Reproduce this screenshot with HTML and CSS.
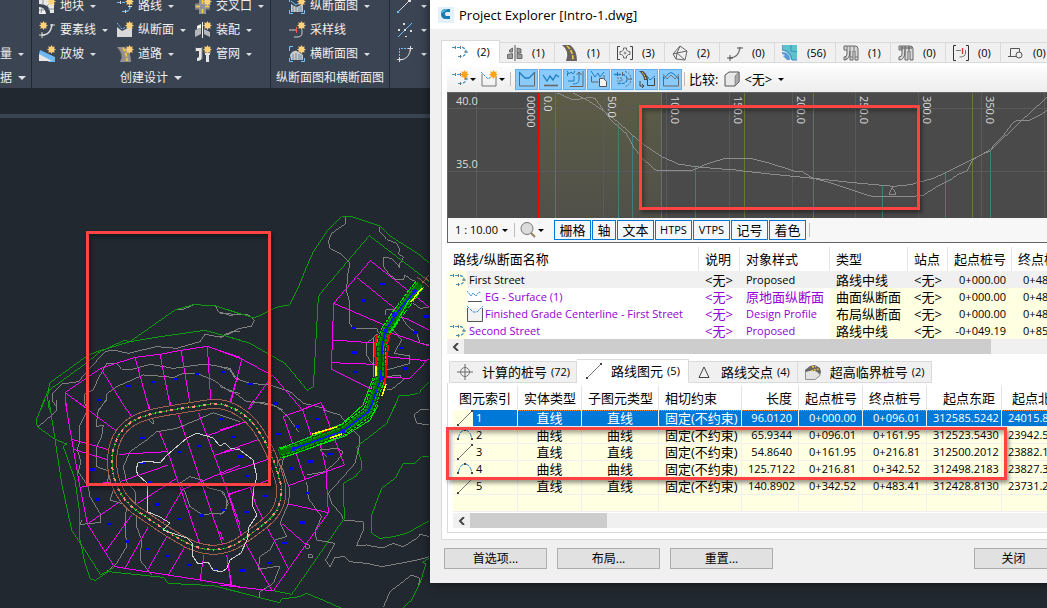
FILE: index.html
```html
<!DOCTYPE html>
<html lang="zh-CN">
<head>
<meta charset="utf-8">
<title>Project Explorer</title>
<link rel="stylesheet" href="styles.css">
</head>
<body>
<svg class="defs" aria-hidden="true">
  <defs>
    <symbol id="sun" viewBox="0 0 10 10"><path d="M5 0l1.2 2.2L8.6 1.4 7.8 3.8 10 5 7.8 6.2l.8 2.4-2.4-.8L5 10 3.8 7.8l-2.4.8.8-2.4L0 5l2.2-1.2-.8-2.4 2.4.8z"/></symbol>
    <symbol id="align" viewBox="0 0 16 16"><path d="M0 3.500h3M5 3.500h4M6 12.500h3" stroke="#3c96c8"/><path d="M10 3.500Q14 4 14 8T9 12.500" fill="none" stroke="#3c96c8" stroke-width="1.300" stroke-dasharray="3 1.500"/><path d="M3.500 2v3M8.500 2v3M12 8h4M8.500 11v3" stroke="#777"/></symbol>
    <symbol id="r-parcel" viewBox="0 0 16 16"><path d="M0 1h10v5h5v9h-4q0-5-3-7T0 6z" fill="#e8e8e8"/><path d="M0 9q6 0 7 7H0z" fill="#f4f4f4"/><path d="M4 1v6M8 8l3-3M9 11h6M3 10l-1 5M0 12h5" stroke="#8b929c" fill="none"/></symbol>
    <symbol id="r-align" viewBox="0 0 16 16"><path d="M0 4.500h3M5 4.500h3M5 13.500h3M9 13.500q4-1 4-5" fill="none" stroke="#6fc1ff" stroke-width="1.200" stroke-dasharray="3 1"/><path d="M3.500 3v3M8.500 12v3M11 8.500h4" stroke="#ddd"/></symbol>
    <symbol id="r-cross" viewBox="0 0 16 16"><path d="M4 0h7v5h4v7h-4v4H4v-4H0V5h4z" fill="#8f9296"/><path d="M7.500 2v4M7.500 11v4M1 8.500h4M10 8.500h4" stroke="#ffc93c" stroke-width="1.500"/><path d="M4 5q-1 0-4 1M4 12q-1-1-4-1M11 12q1-1 4-1" stroke="#555" fill="none"/></symbol>
    <symbol id="r-feature" viewBox="0 0 16 16"><path d="M3 13q9 0 10-11" fill="none" stroke="#ddd" stroke-width="1.500"/><path d="M0 13h6M3 10v6M11 3h5" stroke="#ddd"/></symbol>
    <symbol id="r-profile" viewBox="0 0 16 16"><path d="M0 5l5 4 4-2 6-3v11H0z" fill="#d9d9d9"/><path d="M0 1l5 6 4-2" fill="none" stroke="#6fc1ff" stroke-dasharray="2 1"/></symbol>
    <symbol id="r-assembly" viewBox="0 0 16 16"><path d="M0 8l6-2v6l-6 3zM9 7l6 3v5l-6-3z" fill="#b5b7ba"/><path d="M2 4l4-2v4l-4 1z" fill="#f5f5f5"/><path d="M7.500 0v16" stroke="#eee"/></symbol>
    <symbol id="r-grade" viewBox="0 0 16 16"><path d="M0 8l1-4 15 7v5H10z" fill="#6fb9f2"/><path d="M0 8v7h13z" fill="#e8e8e8"/></symbol>
    <symbol id="r-road" viewBox="0 0 16 16"><path d="M0 1h8q6 5 6 15H3Q7 7 0 1z" fill="#95918b"/><path d="M6 2q4 5 4 13" fill="none" stroke="#ffc93c" stroke-width="1.600" stroke-dasharray="4 1.500"/><path d="M0 1q5 5 5 12" fill="none" stroke="#666"/></symbol>
    <symbol id="r-pipe" viewBox="0 0 16 16"><path d="M1 2h6v9q0 4-5 4v-3q2 0 2-2V5H1zM10 7h5v2h-1v7h-3V9h-1z" fill="#e6e6e6"/><path d="M0 1v5M7 1v12M10 6h5" stroke="#8b8e92"/></symbol>
    <symbol id="r-pview" viewBox="0 0 16 16"><path d="M2 6l3 2 3 1 6-3v8H2z" fill="#c8cdd2"/><path d="M4 8v6M7 9v5M10 9v5M12 8v6" stroke="#6f87a0"/><path d="M2 3l5 4 3-2" fill="none" stroke="#6fc1ff"/><path d="M.5 12v3.500H4M12 15.500h3.500V12M.5 4V.5H4" fill="none" stroke="#6fc1ff"/></symbol>
    <symbol id="r-section" viewBox="0 0 16 16"><path d="M1 9q3-5 7-4l6 4v5H2z" fill="#c8cdd2"/><path d="M4 8v6M7 7v7M10 8v6M12 9v5" stroke="#6f87a0"/><path d="M.5 12v3.500H4M12 15.500h3.500V12M.5 5V.5H4" fill="none" stroke="#6fc1ff"/></symbol>
    <symbol id="r-sample" viewBox="0 0 16 16"><path d="M0 8h7M13 8v3q0 4-5 4H5" fill="none" stroke="#ccc"/><path d="M7.500 5v6" stroke="#ff5a5a"/></symbol>
    <symbol id="r-line" viewBox="0 0 16 16"><path d="M1 14L12 3" stroke="#ddd"/><path d="M11 1h3v3h-3z" fill="#ddd"/><path d="M0 13h2v2H0z" fill="#6fc1ff"/></symbol>
    <symbol id="r-xline" viewBox="0 0 16 16"><path d="M1 15L15 1" stroke="#6fc1ff"/><path d="M6 1h2v2H6zM1 7h2v2H1zM7 7h2v2H7zM13 8h2v2h-2zM8 14h2v1H8z" fill="#ddd"/></symbol>
    <symbol id="r-arc" viewBox="0 0 16 16"><path d="M2.500 13V2.500H13" fill="none" stroke="#6fc1ff" stroke-dasharray="2 1"/><path d="M3 14q10-1 10.500-12" fill="none" stroke="#ddd"/><path d="M0 13.500h6M2.500 11v5M11 2.500h5M13.500 0v5" stroke="#ddd"/></symbol>
    <symbol id="asm" viewBox="0 0 16 16"><path d="M.5 9.500l5-1v5h-5zM10 8.500l5 1v4h-5zM2.500 5l3-2v4h-3zM10 3l4 1v4h-4z" fill="#9a9a9a" stroke="#555" stroke-width=".8"/><path d="M8 0v16" stroke="#555"/></symbol>
    <symbol id="road" viewBox="0 0 16 16"><path d="M0 0h8q7 5 7 16H4Q8 6 0 0z" fill="#66625e"/><path d="M5 1q6 5 6 14" fill="none" stroke="#ffc93c" stroke-width="1.600" stroke-dasharray="4 1.500"/></symbol>
    <symbol id="pgroup" viewBox="0 0 16 16"><path d="M3 1.500H.5v13H3M13 1.500h2.500v13H13" fill="none" stroke="#444"/><path d="M6.500 3h3v2l2 1.500h1.500v3h-1.500L9.500 11v2h-3v-2l-2-1.500H3v-3h1.500L6.500 5z" fill="none" stroke="#666"/><circle cx="8" cy="8" r="1" fill="none" stroke="#555" stroke-width=".7"/></symbol>
    <symbol id="surf" viewBox="0 0 16 16"><path d="M8 1l7 5-2 9-9-1-3-5zM8 1L5 8l8 7M1 9l4-1 10-2M5 8l-1 6" fill="none" stroke="#666"/></symbol>
    <symbol id="feat" viewBox="0 0 16 16"><path d="M2 13q10 0 11-11" fill="none" stroke="#777" stroke-width="1.300"/><path d="M0 13h6M3 10v6M10 3h6" stroke="#555"/></symbol>
    <symbol id="site" viewBox="0 0 16 16"><path d="M0 0h15v15H9Q8 8 0 5z" fill="#5bc4cb"/><path d="M0 0v5q9 0 10 10h5M9 0v6l6 1" fill="none" stroke="#4b86c7"/><path d="M0 7q8 0 8 8H5l-4-4 2-1-3-1z" fill="#5b9bd5"/></symbol>
    <symbol id="pipe" viewBox="0 0 16 16"><path d="M1 1h11q3 0 3 3v11h-3V6h-2v9H7V6Q7 15 1 15v-3q3 0 3-3V5H1z" fill="#d9d9d9" stroke="#666"/><path d="M4 1v4M7 1v5M11 1v4M3 12v3M12 12h3M7 12h3" stroke="#777"/></symbol>
    <symbol id="ppipe" viewBox="0 0 16 16"><path d="M1 1h11q3 0 3 3v11h-3V6h-2v9H7V6Q7 15 1 15v-3q3 0 3-3V5H1z" fill="#d9d9d9" stroke="#666"/><path d="M2 3h12M4 1v4M7 1v5M11 1v4" stroke="#777" stroke-width="1.600"/></symbol>
    <symbol id="slg" viewBox="0 0 16 16"><path d="M3 .5H.5v15H3M13 .5h2.500v15H13" fill="none" stroke="#333"/><path d="M3 5.500h5M12.500 5v3q0 4-6 4" fill="none" stroke="#777"/><path d="M9.500 3v6" stroke="#d33" stroke-width="1.300"/></symbol>
    <symbol id="vf" viewBox="0 0 16 16"><path d="M2.500 3.500h9v8h-9zM0 11.500h14" fill="none" stroke="#555"/><circle cx="11" cy="10" r="3" fill="#eee" stroke="#555"/></symbol>
    <symbol id="prof" viewBox="0 0 16 16"><path d="M1 3v12h14V5" fill="none" stroke="#777"/><path d="M0 1l7 7 3-2" fill="none" stroke="#2d8fd0" stroke-dasharray="2.500 1"/></symbol>
    <symbol id="t1" viewBox="0 0 18 18"><path d="M1.500 3v13h15V3" fill="none" stroke="#666"/><path d="M1 2l6 6h4l6-6" fill="none" stroke="#1b7fc4" stroke-width="1.300"/></symbol>
    <symbol id="t2" viewBox="0 0 18 18"><path d="M2 15.500h14" stroke="#666" stroke-width="1.600"/><path d="M1 5l4 6 3-5 3 4 3-5 3 2" fill="none" stroke="#1b7fc4" stroke-width="1.300"/></symbol>
    <symbol id="t3" viewBox="0 0 18 18"><path d="M1 1l2 3 2-2 2 2 2-3M2 11h6V6M13 3v7q0 4-6 4" fill="none" stroke="#1b7fc4"/><path d="M1.500 3v3M10.500 5L13 2l2.500 3M4 16.500h13V1" fill="none" stroke="#666"/></symbol>
    <symbol id="t4" viewBox="0 0 18 18"><path d="M1 1l4 6 3-4 2 4 4-5" fill="none" stroke="#1b7fc4"/><path d="M1.500 6v6h7M14 5v4" fill="none" stroke="#666"/><path d="M9.500 8.500h4l3 3v5h-7z" fill="#f4f4f4" stroke="#555"/></symbol>
    <symbol id="t5" viewBox="0 0 18 18"><path d="M0 4.500h8q5 .5 5 4.500t-5 4.500H3" fill="none" stroke="#1b7fc4" stroke-width="1.300" stroke-dasharray="3 1"/><path d="M3 8h5v3H3M11 1.500q6 2 6 7.500t-6 7.500" fill="none" stroke="#60707c" stroke-dasharray="2 1"/><path d="M3.500 2v4M8.500 2v4M12 9h6" stroke="#666"/></symbol>
    <symbol id="t6" viewBox="0 0 18 18"><path d="M1 1h4q5 4 5 9H6Q6 5 1 1z" fill="#4f4c49"/><path d="M4 2q3 3 4 8" fill="none" stroke="#ffc93c" stroke-dasharray="2 1"/><path d="M2 11v5h4M4 14l2 2-2 2M9.500 10v5.500h7V8" fill="none" stroke="#444"/><path d="M9 6l3 4 5-4" fill="none" stroke="#1b7fc4"/></symbol>
    <symbol id="t7" viewBox="0 0 18 18"><path d="M1.500 6v10h15V6" fill="none" stroke="#666"/><path d="M1 10l5-6q3-3 6 0l5 6" fill="none" stroke="#1b7fc4"/><path d="M1 4l4 5 4-4 4 4 4-5" fill="none" stroke="#777"/></symbol>
    <symbol id="cube" viewBox="0 0 16 16"><path d="M1 4l4-3h10v10l-4 4H1z" fill="#e8e8e8" stroke="#555"/><path d="M11 15V5l4-4v10z" fill="#aaa" stroke="#555" stroke-width=".5"/></symbol>
    <symbol id="lens" viewBox="0 0 16 16"><path d="M11 11l4 4" stroke="#9a7b5a" stroke-width="2"/><circle cx="7" cy="6.500" r="6" fill="#dcdcdc" stroke="#777"/></symbol>
    <symbol id="eg" viewBox="0 0 16 16"><path d="M1 12.500h14" stroke="#555"/><path d="M0 2l4 5 2-3 3 3 3-4 2 1" fill="none" stroke="#2d8fd0" stroke-dasharray="2 .7"/></symbol>
    <symbol id="fg" viewBox="0 0 16 16"><path d="M.5 2v13.500h15V2" fill="#f2f2f2" stroke="#555"/><path d="M0 0l6 6h4l6-6" fill="none" stroke="#2d8fd0" stroke-dasharray="3 1"/></symbol>
    <symbol id="target" viewBox="0 0 16 16"><circle cx="8" cy="8" r="4.500" fill="none" stroke="#777"/><path d="M0 8h16M8 0v16" stroke="#666"/></symbol>
    <symbol id="line" viewBox="0 0 16 16"><path d="M1 15L15 1" stroke="#777"/><path d="M0 14h2v2H0zM14 0h2v2h-2z" fill="#444"/></symbol>
    <symbol id="arc" viewBox="0 0 16 16"><path d="M1 12Q3 3 8 3t7 9" fill="none" stroke="#2d8fd0" stroke-dasharray="5 1"/><path d="M0 11h2v2H0zM14 11h2v2h-2zM7 2h2v2H7z" fill="#444"/></symbol>
    <symbol id="tri" viewBox="0 0 16 16"><path d="M3 13.500h10L8 3z" fill="none" stroke="#444"/></symbol>
    <symbol id="super" viewBox="0 0 16 16"><path d="M.5 6v9.500H10l5-4V6z" fill="#e2e2e2" stroke="#777" stroke-width=".8"/><path d="M0 6l5-4 5-1 5 3 1 5-2 1q-4-6-13-2z" fill="#6b6864"/><path d="M6 7l3-1 5-1M7 3l4-.5" stroke="#ffc93c" stroke-width="1.300" stroke-dasharray="2 1"/></symbol>
    <symbol id="logo" viewBox="0 0 16 16"><path d="M0 0h16v16H0z" fill="#e4f0f7"/><path d="M12 5V2H8Q3 2 3 7t5 5h4V9H8.500Q7 9 7 7t1.500-2z" fill="#1c79ad"/><path d="M3 7q0-5 5-5h2L6 5z" fill="#4ab3dc"/></symbol>
    <linearGradient id="zone" x1="0" y1="0" x2="0" y2="1"><stop offset="0" stop-color="#5c5c47"/><stop offset="1" stop-color="#505049"/></linearGradient>
  </defs>
</svg>

<main class="desktop">
  <header class="ribbon">
    <section class="group group-edge">
      <div class="tools"><span></span><span></span><button class="tool">量<i class="caret"></i></button></div>
      <button class="group-name">据<i class="caret big"></i></button>
    </section>
    <section class="group group-design">
      <div class="tools tools-3">
        <button class="tool"><span class="ico"><svg><use href="#r-parcel"/></svg><svg class="new"><use href="#sun"/></svg></span>地块<i class="caret"></i></button>
        <button class="tool"><span class="ico"><svg><use href="#r-align"/></svg><svg class="new"><use href="#sun"/></svg></span>路线<i class="caret"></i></button>
        <button class="tool"><span class="ico"><svg><use href="#r-cross"/></svg><svg class="new"><use href="#sun"/></svg></span>交叉口<i class="caret"></i></button>
        <button class="tool"><span class="ico"><svg><use href="#r-feature"/></svg><svg class="new left"><use href="#sun"/></svg></span>要素线<i class="caret"></i></button>
        <button class="tool"><span class="ico"><svg><use href="#r-profile"/></svg><svg class="new"><use href="#sun"/></svg></span>纵断面<i class="caret"></i></button>
        <button class="tool"><span class="ico"><svg><use href="#r-assembly"/></svg><svg class="new"><use href="#sun"/></svg></span>装配<i class="caret"></i></button>
        <button class="tool"><span class="ico"><svg><use href="#r-grade"/></svg><svg class="new"><use href="#sun"/></svg></span>放坡<i class="caret"></i></button>
        <button class="tool"><span class="ico"><svg><use href="#r-road"/></svg><svg class="new"><use href="#sun"/></svg></span>道路<i class="caret"></i></button>
        <button class="tool"><span class="ico"><svg><use href="#r-pipe"/></svg><svg class="new"><use href="#sun"/></svg></span>管网<i class="caret"></i></button>
      </div>
      <button class="group-name">创建设计<i class="caret big"></i></button>
    </section>
    <section class="group group-views">
      <div class="tools">
        <button class="tool"><span class="ico"><svg><use href="#r-pview"/></svg><svg class="new"><use href="#sun"/></svg></span>纵断面图<i class="caret"></i></button>
        <button class="tool"><span class="ico"><svg><use href="#r-sample"/></svg><svg class="new"><use href="#sun"/></svg></span>采样线</button>
        <button class="tool"><span class="ico"><svg><use href="#r-section"/></svg><svg class="new"><use href="#sun"/></svg></span>横断面图<i class="caret"></i></button>
      </div>
      <div class="group-name">纵断面图和横断面图</div>
    </section>
    <section class="group group-draw">
      <div class="tools">
        <button class="tool" aria-label="直线"><span class="ico"><svg><use href="#r-line"/></svg></span><i class="caret"></i></button>
        <button class="tool" aria-label="构造线"><span class="ico"><svg><use href="#r-xline"/></svg></span><i class="caret"></i></button>
        <button class="tool" aria-label="圆弧"><span class="ico"><svg><use href="#r-arc"/></svg></span><i class="caret"></i></button>
      </div>
      <div class="group-name"></div>
    </section>
  </header>
  <div class="strip"></div>

  <svg class="drawing" width="430" height="490" viewBox="0 118 430 490" role="img" aria-label="Intro-1.dwg">
    <g transform="translate(0 200) scale(.33333)">
      <path class="gray" d="M525 328L550 328 580 315M645 317L655 335 690 346 720 343M168 630L170 620 158 605 158 580 185 552 235 545 265 510 315 455 340 450 385 460 470 440 530 445 600 425 615 403 665 412 700 395 720 395M265 630L253 610 255 582 280 570 295 535 320 490 350 490 365 508 400 507 450 493 520 505 615 492 690 505 705 530 720 540M298 630L318 600 320 582 350 560 430 525 500 530 520 533 550 520 590 520 640 540 690 575 720 580"/>
      <path class="green" d="M120 630L145 570 150 548 265 465 300 452 390 425 525 330 580 314 645 317 720 342M148 630L142 590 148 570 265 485 300 455 375 420 385 426 480 410 615 391 720 420"/>
      <path class="lot" d="M200 630L195 578 302 505 405 472 480 463 543 451 622 439 720 472M195 578L265 628M302 505L380 630M405 472L448 630M480 463L512 625M543 451L570 610M622 439L632 600M720 500L690 605"/>
      <path class="dot" d="M293 601h14M378 558h14M453 547h14M520 537h14M584 522h14M664 517h14"/>
    </g>
    <g transform="translate(220 200) scale(.33333)">
      <path class="gray" d="M0 340L85 345 103 360 95 378 60 385 0 410M378 50L378 70 335 100 325 125 330 145 360 160 390 190 382 230 380 275 390 310 388 370 400 385 470 385 475 400 440 430 440 465 455 490 480 500M478 80L480 95 500 118 530 130 540 148 535 160 550 172 540 190 540 203 515 175 490 172 490 200 510 225 530 240 550 240 555 225 575 240 590 245M0 500L30 510 45 535 90 550 150 555 210 575 250 610 315 625M0 560L40 575 80 605 150 610 190 630M500 570L515 568 550 540 540 525 500 530M545 350L560 375 590 400 600 430 628 435M520 390L545 420 522 460 570 468 570 490 500 510M580 310L600 325 628 322M497 345L497 330 525 330"/>
      <path class="green" d="M0 322L103 354 175 320 208 315 235 262 260 200 280 155 320 95 365 50 395 50 440 65 480 78 510 108 600 165 628 190M0 403L90 430 195 490 262 571 280 560 295 290 310 270 448 107 628 245M520 630L538 585 560 587 595 580 628 545"/>
      <path class="lot" d="M0 453L65 477 160 528 245 628 303 608 315 630M65 477L33 605M158 525L85 628M451 182L341 310 337 420 334 508 465 573M451 182L628 322M410 232L530 330M341 310L500 378M337 420L480 430M334 488L465 493M545 350L628 390M515 400L628 438M500 470L620 482 570 535 500 532M628 475L620 482"/>
      <path class="brown" d="M590 230L628 260M600 255L628 225M612 230L628 245"/>
      <path class="dot" d="M4 517h14M84 552h14M159 611h14M480 253h14M425 302h14M395 384h14M397 458h14M399 517h14M581 398h14M537 445h14M550 506h14M613 350h14"/>
    </g>
    <g transform="translate(0 400) scale(.33333)">
      <path class="gray" d="M168 0L170 30 150 50 115 80M258 40L240 75 240 120 232 150 243 185 235 215 265 260 270 290 300 340 303 368 265 370 240 375 245 360M320 0L295 30 288 80 310 75 305 110 290 140 290 200 330 215 320 250M720 65L640 38 590 60 530 85 470 95 440 120 390 155 370 200 380 245 405 275 410 380 425 420 420 480 455 525M540 250L570 230 605 240 620 262 670 275 685 310 670 340 605 343 570 320 555 275 540 250M340 270L330 300 380 315 375 370 380 440 350 490 320 515M465 45L446 60 460 72 458 45"/>
      <path class="green" d="M135 0L108 60 112 80 165 118 200 132 190 140 225 240 240 345 240 420 255 490 270 535 285 542 325 515 490 532 505 550 640 557 720 577M147 0L165 118 185 250 215 390 245 435 302 525 345 500"/>
      <path class="lot" d="M195 0L215 118 240 262 262 372 343 500 600 540 720 560M215 118L330 150M218 147L325 180M225 0L358 100M360 0L400 57M440 0L452 32M508 0L515 20M478 95L503 155 600 435M535 45L668 435M595 38L720 375M358 163L503 155M505 195L360 245M530 235L405 315M550 265L485 375M620 108L720 72M645 165L720 145M545 270L720 195M685 285L720 270M240 262L265 258M310 248L340 245M262 372L355 308M318 452L395 345M373 508L445 380M440 515L500 410M505 525L555 440M600 540L612 465M693 555L680 465"/>
      <path class="dot" d="M292 0h14M420 115h14M270 209h14M421 190h14M285 299h14M466 314h14M321 373h14M374 425h14M436 447h14M496 468h14M561 495h14M641 511h14M530 157h14M590 138h14M657 58h14M693 112h14M440 247h14M530 357h14M599 347h14M664 331h14"/>
    </g>
    <g transform="translate(220 400) scale(.33333)">
      <path class="gray" d="M628 30L600 30 582 45 590 70 628 75M490 622L510 575 575 525 600 535 595 560M100 5L170 20 200 45 235 95M310 30L360 45 380 70 420 110 420 130 405 190 370 230 325 280 335 310 365 345 370 360 430 365 430 390 410 437 440 435 460 440 490 443 520 430 550 440 590 415 600 403 628 410M628 470L600 478 540 490 485 500 440 490 390 485 375 470 345 472 330 500 317 480 345 430 290 420 285 395 305 350 265 295 260 245M320 170L300 150 350 145 370 155 350 185 315 215 260 225M190 175L185 200 210 270 205 310 180 370 200 410 165 420 150 450 120 470 115 508 180 498 160 550 120 575 118 590M0 270L20 295 20 325 0 345M258 435h10v10h-10zM265 465h12v8h-12z"/>
      <path class="green" d="M532 0L500 70 410 140 425 185 423 210 405 230 370 250 373 355 215 583 160 572M0 562L178 608 185 597 240 590 260 580 320 605 365 625M628 168L605 170 585 190 550 190 525 235 485 265 455 345 455 400 480 415 520 410 560 400 628 362M628 475L605 488 618 490 600 550 575 600 550 622"/>
      <path class="lot" d="M160 572L325 338 318 215M190 50L303 8 373 195 205 257M190 50L255 238M248 30L275 110M300 130L320 215M205 312L325 338M185 370L260 435M110 320L205 505M25 285L65 410 155 570M35 555L20 465M0 90L80 65M0 160L125 115M0 225L145 178M25 283L90 262 110 320M90 262L145 240M0 555L160 573M85 28L100 0M0 395L10 420"/>
      <path class="dot" d="M-2 58h14M33 112h14M55 170h14M76 229h14M129 288h14M73 337h14M3 331h14M225 80h14M284 58h14M168 102h14M206 206h14M265 185h14M324 163h14M254 280h14M240 368h14M186 430h14M141 490h14M61 512h14"/>
    </g>
    <g fill="none">
      <path class="street-edge" d="M112 463C112 446 118 430 133 421S175 410 210 404C230 402 248 415 258 430S275 460 281 485C284 512 268 522 245 538C230 550 212 553 194 546S160 526 137 511C122 500 113 485 112 463z"/>
      <path class="street-fill" d="M112 463C112 446 118 430 133 421S175 410 210 404C230 402 248 415 258 430S275 460 281 485C284 512 268 522 245 538C230 550 212 553 194 546S160 526 137 511C122 500 113 485 112 463z"/>
      <path class="street-axis" d="M112 463C112 446 118 430 133 421S175 410 210 404C230 402 248 415 258 430S275 460 281 485C284 512 268 522 245 538C230 550 212 553 194 546S160 526 137 511C122 500 113 485 112 463z"/>
      <path class="street-ticks" d="M112 463C112 446 118 430 133 421S175 410 210 404C230 402 248 415 258 430S275 460 281 485C284 512 268 522 245 538C230 550 212 553 194 546S160 526 137 511C122 500 113 485 112 463z"/>
      <path class="white" d="M240 450L230 448 225 443 220 446 213 438 197 433 187 438 167 455 160 463 147 461 138 463 136 470 138 475 147 483 148 512 160 517 170 523 163 530 187 538 192 543 192 555 198 564 208 562 213 570 222 572 227 568 230 560 241 553 247 540 249 527 257 515 252 505 254 487 257 477 253 460 240 450"/>
      <path class="brown" d="M270 450l5 0M277 466v-5l5-2M279 472l2-7"/>
    </g>
    <g fill="none" stroke-linejoin="round">
      <path stroke="#00e600" stroke-width="11" stroke-dasharray="3 1" d="M420 284L396 316 386 331 381 346 380 378 371 404 368 412 343 430 293 449 279 453"/>
      <path stroke="#0b4210" stroke-width="9" d="M421 283L396 316 386 331 381 346 380 378 371 404 368 412 343 430 293 449 279 453"/>
      <path stroke="#009a00" stroke-width="7" stroke-dasharray="4 1" d="M420 284L396 316 386 331 381 346 380 378 371 404 368 412 343 430 293 449 279 453"/>
      <path stroke="#006a00" stroke-width="4" d="M420 284L396 316 386 331 381 346 380 378 371 404 368 412 343 430 293 449 279 453"/>
      <path stroke="#00e600" stroke-width="1" d="M374 338L373 378 363 405 342 424 280 449M410 298L398 320 389 334M378 405L370 420 345 436 282 458"/>
      <path stroke="#f00" stroke-width="2" d="M377 335L375 345 376 368M390 333L387 344M388 345L385 385M322 432L330 429"/>
      <path stroke="#ff0" stroke-width="1.500" d="M422 288L411 302M376 366v10M386 384l-4 12M312 434L337 427M330 438l12-4"/>
      <path stroke="#11f" stroke-width="1.500" d="M415 291L395 315 386 330 382 346 381 378 372 404 368 412 343 431 293 449"/>
      <path stroke="#11f" stroke-width="4" d="M413 293l3-3M393 317l3-4M385 332l2-4M381 380l1-4M341 431h4M292 449h3"/>
    </g>
  </svg>
  <div class="mark mark-drawing"></div>

  <section class="window">
    <header class="titlebar"><svg class="i16"><use href="#logo"/></svg><h1>Project Explorer [Intro-1.dwg]</h1></header>

    <nav class="tabs" role="tablist">
      <button class="tab on first"><svg class="i16"><use href="#align"/></svg>(2)</button>
      <button class="tab"><svg class="i16"><use href="#asm"/></svg>(1)</button>
      <button class="tab"><svg class="i16"><use href="#road"/></svg>(1)</button>
      <button class="tab"><svg class="i16"><use href="#pgroup"/></svg>(3)</button>
      <button class="tab"><svg class="i16"><use href="#surf"/></svg>(2)</button>
      <button class="tab"><svg class="i16"><use href="#feat"/></svg>(0)</button>
      <button class="tab wide"><svg class="i16"><use href="#site"/></svg>(56)</button>
      <button class="tab"><svg class="i16"><use href="#pipe"/></svg>(1)</button>
      <button class="tab"><svg class="i16"><use href="#ppipe"/></svg>(0)</button>
      <button class="tab"><svg class="i16"><use href="#slg"/></svg>(0)</button>
      <button class="tab"><svg class="i16"><use href="#vf"/></svg>(0)</button>
    </nav>

    <div class="page">
      <div class="toolbar">
        <button class="plain" aria-label="新建路线"><span class="ico"><svg><use href="#align"/></svg><svg class="new hot"><use href="#sun"/></svg></span><i class="caret dark"></i></button>
        <button class="plain" aria-label="新建纵断面"><span class="ico"><svg><use href="#prof"/></svg><svg class="new hot"><use href="#sun"/></svg></span><i class="caret dark"></i></button>
        <i class="sep"></i>
        <div class="toggles">
          <button class="toggle" aria-label="布局"><svg><use href="#t1"/></svg></button>
          <button class="toggle" aria-label="曲面"><svg><use href="#t2"/></svg></button>
          <button class="toggle" aria-label="叠合"><svg><use href="#t3"/></svg></button>
          <button class="toggle" aria-label="文件"><svg><use href="#t4"/></svg></button>
          <button class="toggle" aria-label="偏移"><svg><use href="#t5"/></svg></button>
          <button class="toggle" aria-label="道路"><svg><use href="#t6"/></svg></button>
          <button class="toggle" aria-label="连接"><svg><use href="#t7"/></svg></button>
        </div>
        <i class="sep"></i>
        <label class="compare" for="compare">比较:</label>
        <svg class="i16"><use href="#cube"/></svg>
        <span class="drop"><select id="compare" class="zh"><option>&lt;无&gt;</option></select><i class="caret dark"></i></span>
      </div>

      <div class="viewer">
        <svg class="plot" role="img" aria-label="纵断面">
          <rect x="91" y="0" width="123" height="125" fill="url(#zone)"/>
          <path stroke="#5a5a5a" d="M28.500 0v125M155.500 0v125M218.500 0v125M281.500 0v125M344.500 0v125M407.500 0v125M470.500 0v125M533.500 0v125M596.500 0v125M0 15.500h2000M0 78.500h2000"/>
          <path stroke="#647d2d" d="M213.500 0v125M296.500 0v125M365.500 0v125M524.500 0v125"/>
          <path stroke="#3f7f78" d="M107.500 0v125M170.500 29v96M184.500 42v83M247.500 74v51M434.500 93v32M497.500 80v45M542.500 57v68"/>
          <path stroke="#f00" stroke-width="2" d="M91 0v125"/>
          <g class="curve">
            <path transform="translate(-18 -3) scale(.33333)" d="M430 9L480 35 520 62 565 97 607 135 635 160 695 200 745 222 796 230 850 235 930 241M382 9L425 28 450 27 480 22 495 25 520 60 545 92 590 132 610 170 640 208 680 243 780 243 796 237 830 222 885 205 930 205"/>
            <path transform="translate(289 -3) scale(.33333)" d="M0 241L100 252 229 265 340 277 436 286 470 289 520 284 545 277 590 265 625 248 706 208 760 182 850 95 930 22M0 205L40 205 100 220 170 243 195 245 229 265 270 275 400 318 460 321 515 321 560 315 600 290 640 270 660 255 690 243 706 210 740 190 760 178 800 135 830 95 845 91 880 90 910 75 930 62M455 313h23L466 292z"/>
          </g>
          <g class="plot-text">
            <text x="8" y="12">40.0</text><text x="8" y="75">35.0</text>
            <text transform="translate(79 3) rotate(90)">00000</text>
            <text transform="translate(96 3) rotate(90)">0.0</text>
            <text transform="translate(160 3) rotate(90)">50.0</text>
            <text transform="translate(223 3) rotate(90)">100.0</text>
            <text transform="translate(286 3) rotate(90)">150.0</text>
            <text transform="translate(349 3) rotate(90)">200.0</text>
            <text transform="translate(412 3) rotate(90)">250.0</text>
            <text transform="translate(475 3) rotate(90)">300.0</text>
            <text transform="translate(538 3) rotate(90)">350.0</text>
          </g>
        </svg>
        <div class="mark mark-plot"></div>
        <div class="viewbar">
          <span class="drop scale"><select aria-label="比例"><option>1 : 10.00</option></select><i class="caret dark"></i></span>
          <i class="sep"></i>
          <button class="plain" aria-label="缩放"><svg class="i16"><use href="#lens"/></svg><i class="caret dark"></i></button>
          <div class="flags">
            <button class="flag zh">栅格</button><button class="flag zh small">轴</button><button class="flag zh">文本</button><button class="flag">HTPS</button><button class="flag">VTPS</button><button class="flag zh">记号</button><button class="flag zh">着色</button>
          </div>
          <i class="sep"></i>
        </div>
      </div>

      <div class="list">
        <table class="objects">
          <colgroup><col class="w252"><col class="w41"><col class="w90"><col class="w78"><col class="w40"><col class="w64"><col class="w64"></colgroup>
          <thead><tr><th>路线/纵断面名称</th><th>说明</th><th>对象样式</th><th>类型</th><th>站点</th><th class="num">起点桩号</th><th class="num">终点桩号</th></tr></thead>
          <tbody>
            <tr class="current"><td class="name"><div><svg class="i16"><use href="#align"/></svg>First Street</div></td><td class="zh">&lt;无&gt;</td><td>Proposed</td><td class="zh">路线中线</td><td class="zh">&lt;无&gt;</td><td class="num">0+000.00</td><td class="num">0+483.41</td></tr>
            <tr><td class="name child"><div><svg class="i16"><use href="#eg"/></svg>EG - Surface (1)</div></td><td class="zh">&lt;无&gt;</td><td class="zh">原地面纵断面</td><td class="zh">曲面纵断面</td><td class="zh">&lt;无&gt;</td><td class="num">0+000.00</td><td class="num">0+483.41</td></tr>
            <tr><td class="name child"><div><svg class="i16"><use href="#fg"/></svg>Finished Grade Centerline - First Street</div></td><td class="zh">&lt;无&gt;</td><td>Design Profile</td><td class="zh">布局纵断面</td><td class="zh">&lt;无&gt;</td><td class="num">0+000.00</td><td class="num">0+483.41</td></tr>
            <tr><td class="name"><div><svg class="i16"><use href="#align"/></svg>Second Street</div></td><td class="zh">&lt;无&gt;</td><td>Proposed</td><td class="zh">路线中线</td><td class="zh">&lt;无&gt;</td><td class="num">-0+049.19</td><td class="num">0+854.27</td></tr>
          </tbody>
        </table>
      </div>
      <div class="scroll"><button aria-label="向左滚动"><svg viewBox="0 0 8 8"><path d="M6 0L2 4l4 4" fill="none" stroke="#444" stroke-width="2"/></svg></button><span class="thumb long"></span></div>

      <nav class="tabs inner" role="tablist">
        <button class="tab"><svg class="i16"><use href="#target"/></svg><span class="zh">计算的桩号</span> (72)</button>
        <button class="tab on"><svg class="i16"><use href="#line"/></svg><span class="zh">路线图元</span> (5)</button>
        <button class="tab"><svg class="i16"><use href="#tri"/></svg><span class="zh">路线交点</span> (4)</button>
        <button class="tab"><svg class="i16"><use href="#super"/></svg><span class="zh">超高临界桩号</span> (2)</button>
      </nav>
      <div class="detail">
        <table class="entities">
          <colgroup><col class="w65"><col class="w64"><col class="w77"><col class="w83"><col class="w57"><col class="w64"><col class="w64"><col class="w75"><col class="w69"></colgroup>
          <thead><tr><th>图元索引</th><th>实体类型</th><th>子图元类型</th><th>相切约束</th><th class="num">长度</th><th class="num">起点桩号</th><th class="num">终点桩号</th><th class="num">起点东距</th><th class="num">起点北距</th></tr></thead>
          <tbody>
            <tr class="selected"><td class="index"><div><svg class="i16"><use href="#line"/></svg><span>1</span></div></td><td class="mid zh">直线</td><td class="mid zh">直线</td><td class="zh">固定(不约束)</td><td class="num">96.0120</td><td class="num">0+000.00</td><td class="num">0+096.01</td><td class="num">312585.5242</td><td class="num">24015.8431</td></tr>
            <tr><td class="index"><div><svg class="i16"><use href="#arc"/></svg><span>2</span></div></td><td class="mid zh">曲线</td><td class="mid zh">曲线</td><td class="zh">固定(不约束)</td><td class="num">65.9344</td><td class="num">0+096.01</td><td class="num">0+161.95</td><td class="num">312523.5430</td><td class="num">23942.5172</td></tr>
            <tr><td class="index"><div><svg class="i16"><use href="#line"/></svg><span>3</span></div></td><td class="mid zh">直线</td><td class="mid zh">直线</td><td class="zh">固定(不约束)</td><td class="num">54.8640</td><td class="num">0+161.95</td><td class="num">0+216.81</td><td class="num">312500.2012</td><td class="num">23882.1840</td></tr>
            <tr><td class="index"><div><svg class="i16"><use href="#arc"/></svg><span>4</span></div></td><td class="mid zh">曲线</td><td class="mid zh">曲线</td><td class="zh">固定(不约束)</td><td class="num">125.7122</td><td class="num">0+216.81</td><td class="num">0+342.52</td><td class="num">312498.2183</td><td class="num">23827.3005</td></tr>
            <tr><td class="index"><div><svg class="i16"><use href="#line"/></svg><span>5</span></div></td><td class="mid zh">直线</td><td class="mid zh">直线</td><td class="zh">固定(不约束)</td><td class="num">140.8902</td><td class="num">0+342.52</td><td class="num">0+483.41</td><td class="num">312428.8130</td><td class="num">23731.2263</td></tr>
            <tr><td>&nbsp;</td><td></td><td></td><td></td><td></td><td></td><td></td><td></td><td></td></tr>
          </tbody>
        </table>
        <div class="scroll"><button aria-label="向左滚动"><svg viewBox="0 0 8 8"><path d="M6 0L2 4l4 4" fill="none" stroke="#444" stroke-width="2"/></svg></button><span class="thumb"></span></div>
        <div class="mark mark-rows"></div>
      </div>
    </div>

    <footer class="actions">
      <button>首选项...</button><button>布局...</button><button>重置...</button><button class="close">关闭</button>
    </footer>
  </section>
</main>
</body>
</html>
```

FILE: styles.css
```css
* { box-sizing: border-box; }
body {
  margin: 0;
  background: #212830;
  font: 11px/16px "Open Sans", "Noto Sans CJK SC", sans-serif;
  color: #000;
}
button, select { font: inherit; color: inherit; margin: 0; padding: 0; border: 0; background: none; white-space: nowrap; }
svg { display: block; flex: none; }
.defs { position: absolute; width: 0; height: 0; }
.zh { font-size: 13px; }
.i16 { width: 16px; height: 16px; }

.desktop { position: relative; min-height: 100vh; overflow: hidden; }

/* Ribbon */
.ribbon { display: flex; align-items: flex-end; height: 88px; overflow: hidden; background: #3b4453; color: #f0f0f0; font-size: 12px; }
.group { flex: none; border-right: 1px solid #222933; }
.group-edge { width: 32px; }
.group-design { width: 239px; padding-left: 7px; }
.group-views { width: 119px; }
.group-draw { flex: 1; padding-left: 7px; border: 0; }
.tools { display: grid; grid-auto-rows: 24px; }
.tools-3 { grid-template-columns: repeat(3, 78px); }
.group-views .tools { padding-left: 18px; }
.tool { display: flex; align-items: center; }
.tool .ico { margin-right: 5px; }
.group-draw .tool .ico { margin-right: 2px; }
.group-name { display: flex; align-items: center; justify-content: center; width: 100%; height: 22px; padding-top: 2px; }
.group-edge .group-name { justify-content: flex-start; }
.group-design .group-name { padding-right: 7px; }
.ico { position: relative; width: 16px; height: 16px; flex: none; }
.ico svg { width: 16px; height: 16px; }
.ico .new { position: absolute; top: -1px; right: -1px; width: 9px; height: 9px; fill: #ffd27a; }
.ico .new.left { right: 7px; }
.ico .new.hot { fill: #ffa41c; }
.caret { flex: none; margin-left: 6px; border: 3px solid transparent; border-top-color: #dde1e6; border-bottom: 0; }
.caret.big { border-width: 4px 4px 0; }
.caret.dark { margin-left: 2px; border-top-color: #000; }
.strip { height: 4px; margin-top: 26px; background: #3b4453; }

/* Drawing */
.drawing { shape-rendering: crispEdges; }
.drawing .gray, .drawing .green, .drawing .lot { fill: none; stroke-width: 3; }
.gray { stroke: #808080; }
.green { stroke: #0c9c0c; }
.lot { stroke: #ff00ff; }
.brown { stroke: #a0624c; fill: none; }
.drawing g[transform] .brown { stroke-width: 3; }
.white { stroke: #cfcfcf; }
.dot { stroke: #0000ff; stroke-width: 7; fill: none; }
.street-edge { stroke: #a0624c; stroke-width: 10; }
.street-fill { stroke: #212830; stroke-width: 8; }
.street-axis { stroke: #0c9c0c; }
.street-ticks { stroke: #ff8c78; stroke-width: 2; stroke-dasharray: 3 4 1 3; }

.mark { position: absolute; border: 3px solid #ff4343; box-shadow: 2px 3px 4px rgba(0,0,0,.4), inset 2px 3px 4px rgba(0,0,0,.35); pointer-events: none; }
.mark-drawing { left: 86px; top: 231px; width: 185px; height: 255px; }
.mark-plot { left: 191px; top: 12px; width: 281px; height: 105px; }
.mark-rows { left: -2px; top: 44px; width: 561px; height: 53px; }

/* Window */
.window { position: absolute; left: 430px; right: -16px; top: 0; background: #f0f0f0; box-shadow: 0 0 10px rgba(0,0,0,.55); padding-bottom: 14px; }
.titlebar { display: flex; align-items: center; gap: 5px; height: 29px; padding: 0 8px; background: #fff; }
.titlebar h1 { margin: 0; font-size: 13px; font-weight: 400; }
.tabs { display: flex; align-items: flex-end; height: 23px; margin: 11px 0 0 11px; overflow: hidden; }
.tab { display: flex; flex: none; align-items: center; gap: 9px; width: 55px; height: 21px; padding-left: 7px; border: 1px solid #dadada; border-left: 0; background: #f0f0f0; }
.tab.on { height: 23px; background: #fff; border-bottom-color: #fff; }
.tab.first { width: 59px; padding-left: 10px; border-left: 1px solid #dadada; }
.tab.wide { width: 61px; }
.page { margin-left: 11px; padding: 3px 0 6px 5px; border: solid #dadada; border-width: 0 0 1px 1px; background: #fff; }
.toolbar { display: flex; align-items: center; height: 26px; padding-left: 5px; background: linear-gradient(#fdfdfd, #ededed); }
.plain { display: flex; align-items: center; margin-right: 5px; }
.sep { flex: none; width: 1px; height: 14px; background: #bdbdbd; }
.toolbar .sep { margin: 0 4px 0 0; }
.toggles { display: flex; gap: 1px; margin-right: 2px; }
.toggle { display: grid; place-items: center; width: 23px; height: 21px; border: 1px solid #5fb1ee; background: #8bcbfb; }
.toggle svg { width: 18px; height: 18px; }
.compare { margin-right: 6px; font-size: 13px; }
.drop { display: flex; align-items: center; }
.drop select { appearance: none; }
.toolbar .drop { padding-left: 4px; }
.toolbar .drop .caret { margin-left: 6px; }

.viewer { position: relative; border: 1px solid #646464; border-right: 0; }
.plot { width: 100%; height: 125px; background: #4a4a4a; shape-rendering: crispEdges; }
.curve { fill: none; stroke: #8c8c8c; stroke-width: 3; }
.plot-text { fill: #dcdcdc; }
.viewbar { display: flex; align-items: center; height: 24px; padding-left: 7px; background: #f7f7f7; }
.viewbar .sep { margin-right: 5px; }
.scale .caret.dark { margin: 0 6px 0 4px; }
.viewbar .plain { margin-right: 10px; }
.flags { display: flex; gap: 1px; margin-right: 3px; }
.flag { width: 37px; height: 20px; border: 1px solid #0078d7; background: #f4f8fc; line-height: 18px; }
.flag.small { width: 24px; }

/* Tables */
table { table-layout: fixed; border-collapse: separate; border-spacing: 0; }
th { height: 24px; padding: 0 6px; border-right: 1px solid #e5e5e5; font-size: 13px; font-weight: 400; line-height: 16px; text-align: left; white-space: nowrap; }
td { height: 17px; padding: 0 6px; line-height: 16px; white-space: nowrap; }
.num { text-align: right; }
.mid { text-align: center; }
td div { display: flex; align-items: center; height: 16px; }
.list { overflow: hidden; margin-top: 4px; }
.objects { width: 629px; }
.objects td { color: #9400d3; }
.objects td:nth-child(n+4) { background: #ffffe1; color: #000; }
.objects .current td { background: #f0f0f0; color: #000; }
.objects td.name, .objects .current td.name { padding-left: 3px; background-image: linear-gradient(#ffffe1, #ffffe1); background-size: 20px 100%; background-repeat: no-repeat; }
.objects td.name div { gap: 3px; }
.objects td.child { padding-left: 20px; }
.objects td.child div { gap: 2px; }
.w252 { width: 252px; } .w41 { width: 41px; } .w90 { width: 90px; } .w78 { width: 78px; }
.w40 { width: 40px; } .w65 { width: 65px; } .w64 { width: 64px; } .w77 { width: 77px; }
.w83 { width: 83px; } .w57 { width: 57px; } .w75 { width: 75px; } .w69 { width: 69px; }
.scroll { display: flex; height: 15px; background: #f0f0f0; }
.scroll button { display: grid; place-items: center; width: 17px; }
.scroll svg { width: 8px; height: 8px; }
.thumb { width: 137px; background: #cdcdcd; }
.thumb.long { width: 527px; }

.tabs.inner { height: 24px; margin: 5px 0 0 2px; }
.inner .tab { width: auto; height: 22px; gap: 4px; padding: 0 7px; }
.inner .tab .i16 { margin-right: 5px; }
.inner .tab:first-child { padding-right: 6px; border-left: 1px solid #dadada; }
.inner .tab.on { height: 24px; padding: 0 8px 0 9px; }
.detail { position: relative; padding: 3px 0 4px 5px; border: solid #dadada; border-width: 0 0 1px 1px; }
.entities { width: 618px; }
.entities td { background: #ffffe1; border: solid #f0f0f0; border-width: 0 1px 1px 0; }
.entities td.index { padding-left: 4px; }
.entities td.index div { gap: 3px; }
.entities .mid { padding: 0; }
.entities .selected td { color: #fff; background: repeating-linear-gradient(90deg, #ff8728 0 1px, transparent 1px 2px) 0 0 / 100% 1px no-repeat #0078d7; }
.entities .selected td.index { background: linear-gradient(90deg, #ffffe1 20px, #0078d7 20px); }
.detail .scroll { margin-top: 1px; }

.actions { display: flex; gap: 10px; padding: 8px 10px 0 14px; font-size: 12px; }
.actions button { width: 103px; height: 21px; border: 1px solid #adadad; background: #e1e1e1; line-height: 18px; }
.actions .close { width: 79px; margin-left: auto; }
```
